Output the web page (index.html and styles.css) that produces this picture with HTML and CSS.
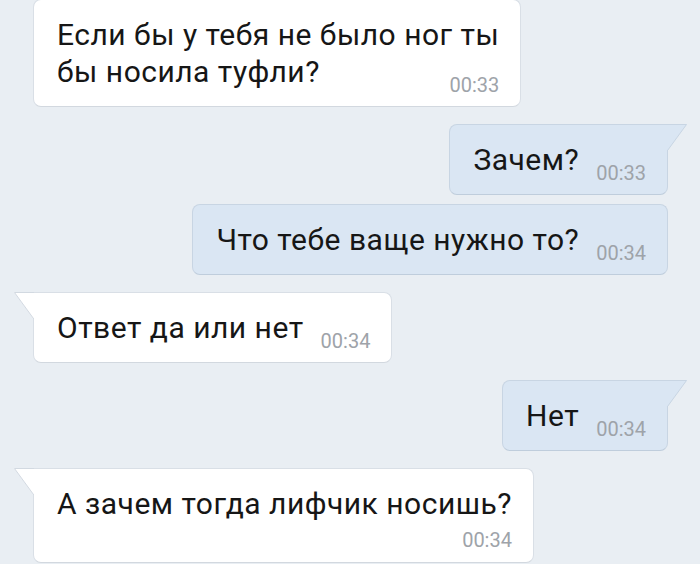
FILE: index.html
```html
<!DOCTYPE html>
<html lang="ru">
<head>
  <meta charset="UTF-8">
  <title>Диалог</title>
  <link rel="stylesheet" href="styles.css">
</head>
<body>

<div class="chat">

  <div class="msg in">
    <div>Если бы у тебя не было ног ты</div>
    <div class="row">
      <span>бы носила туфли?</span>
      <span class="time">00:33</span>
    </div>
  </div>

  <div class="msg out tailed">
    <svg class="tail" viewBox="0 0 21 27"><path class="tail-fill" d="M0 0 H20 L1 26 H0 Z"/><path class="tail-line" d="M0 0.5 H19.5 L0.5 26.5"/></svg>
    <div class="row">
      <span>Зачем?</span>
      <span class="time">00:33</span>
    </div>
  </div>

  <div class="msg out next">
    <div class="row">
      <span>Что тебе ваще нужно то?</span>
      <span class="time">00:34</span>
    </div>
  </div>

  <div class="msg in tailed">
    <svg class="tail" viewBox="0 0 21 27"><path class="tail-fill" d="M21 0 H1 L20 26 H21 Z"/><path class="tail-line" d="M21 0.5 H1.5 L20.5 26.5"/></svg>
    <div class="row">
      <span>Ответ да или нет</span>
      <span class="time">00:34</span>
    </div>
  </div>

  <div class="msg out tailed">
    <svg class="tail" viewBox="0 0 21 27"><path class="tail-fill" d="M0 0 H20 L1 26 H0 Z"/><path class="tail-line" d="M0 0.5 H19.5 L0.5 26.5"/></svg>
    <div class="row">
      <span>Нет</span>
      <span class="time">00:34</span>
    </div>
  </div>

  <div class="msg in tailed">
    <svg class="tail" viewBox="0 0 21 27"><path class="tail-fill" d="M21 0 H1 L20 26 H21 Z"/><path class="tail-line" d="M21 0.5 H1.5 L20.5 26.5"/></svg>
    <div>А зачем тогда лифчик носишь?</div>
    <div class="time own">00:34</div>
  </div>

</div>

</body>
</html>
```

FILE: styles.css
```css
body {
  margin: 0;
  background: #e9eef3;
  font-family: Roboto, 'Noto Sans', sans-serif;
  color: #161616;
  overflow: hidden;
}
.chat {
  display: flex;
  flex-direction: column;
  padding: 0 32px 0 33px;
}
.msg {
  position: relative;
  max-width: 500px;
  padding: 16px 21px 16px 23px;
  border: 1px solid #d9dfe6;
  border-radius: 8px;
  font-size: 30px;
  letter-spacing: 0.5px;
  line-height: 37px;
  margin-top: 17px;
}
.msg:first-child {
  margin-top: -1px;
}
.msg.next {
  margin-top: 9px;
}
.in {
  align-self: flex-start;
  background: #ffffff;
  border-bottom-color: #d2d8df;
}
.out {
  align-self: flex-end;
  background: #dae6f3;
  border-color: #c8d5e3;
  border-bottom-color: #bfcddc;
}
.in.tailed {
  border-top-left-radius: 0;
}
.out.tailed {
  border-top-right-radius: 0;
}
.tail {
  position: absolute;
  top: -1px;
  width: 21px;
  height: 27px;
}
.out .tail {
  right: -21px;
}
.in .tail {
  left: -21px;
}
.out .tail-fill {
  fill: #dae6f3;
}
.in .tail-fill {
  fill: #ffffff;
}
.tail-line {
  fill: none;
  stroke: #d2d9e1;
  stroke-width: 1;
}
.out .tail-line {
  stroke: #c8d5e3;
}
.row {
  display: flex;
  align-items: flex-end;
  justify-content: space-between;
  gap: 17px;
}
.time {
  font-size: 20px;
  letter-spacing: 0;
  line-height: 20px;
  color: #9ea3a9;
  margin-bottom: -5px;
}
.time.own {
  text-align: right;
  line-height: 24px;
  margin: 6px 0 -6px;
}
```
